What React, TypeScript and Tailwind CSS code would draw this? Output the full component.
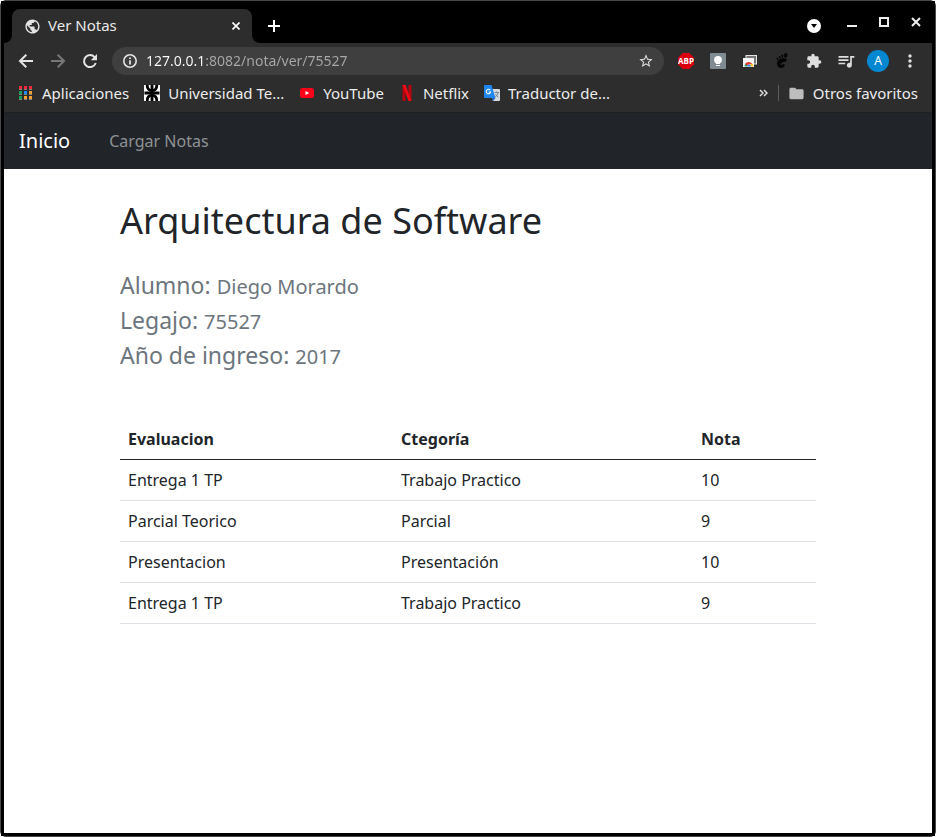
import type { ReactNode } from "react";
import {
  MdStarBorder,
  MdExtension,
  MdQueueMusic,
  MdMoreVert,
  MdPublic,
  MdFolder,
} from "react-icons/md";

const grades = [
  { evaluation: "Entrega 1 TP", category: "Trabajo Practico", grade: 10 },
  { evaluation: "Parcial Teorico", category: "Parcial", grade: 9 },
  { evaluation: "Presentacion", category: "Presentación", grade: 10 },
  { evaluation: "Entrega 1 TP", category: "Trabajo Practico", grade: 9 },
];

function ToolButton({ label, children }: { label: string; children: ReactNode }) {
  return (
    <button type="button" aria-label={label} className="flex h-7 w-8 shrink-0 items-center justify-center">
      {children}
    </button>
  );
}

function Bookmark({ icon, children }: { icon: ReactNode; children: ReactNode }) {
  return (
    <a href="#" className="flex items-center gap-2 whitespace-nowrap">
      <span className="flex size-4 shrink-0 items-center justify-center">{icon}</span>
      {children}
    </a>
  );
}

function BackIcon() {
  return (
    <svg width="20" height="20" viewBox="0 0 20 20" fill="none" stroke="#e4e4e4" strokeWidth="2">
      <path d="M17 10H4.500M10.300 3.700L4 10l6.300 6.300" />
    </svg>
  );
}

function ForwardIcon() {
  return (
    <svg width="20" height="20" viewBox="0 0 20 20" fill="none" stroke="#777" strokeWidth="2">
      <path d="M3 10h12.500M9.700 3.700L16 10l-6.300 6.300" />
    </svg>
  );
}

function ReloadIcon() {
  return (
    <svg width="20" height="20" viewBox="0 0 20 20">
      <path d="M14.600 6.200A6 6 0 1 0 15.700 12" fill="none" stroke="#e4e4e4" strokeWidth="2" />
      <path d="M17 3v6.200h-6.200z" fill="#e4e4e4" />
    </svg>
  );
}

function InfoIcon() {
  return (
    <svg width="16" height="16" viewBox="0 0 16 16" className="shrink-0" aria-hidden>
      <circle cx="8" cy="8" r="6.200" fill="none" stroke="#e4e4e4" strokeWidth="1.600" />
      <path d="M7.100 7.200h1.800v4.300H7.100zM7.100 4.400h1.800v1.700H7.100z" fill="#e4e4e4" />
    </svg>
  );
}

function AppsIcon() {
  const rows = [
    ["#f5273a", "#f5273a", "#f5273a"],
    ["#12a05c", "#1a8cff", "#f9a02c"],
    ["#12a05c", "#f9a02c", "#f9a02c"],
  ];
  return (
    <svg width="16" height="16" viewBox="0 0 16 16" shapeRendering="crispEdges">
      {rows.map((row, y) =>
        row.map((color, x) => (
          <g key={`${x}-${y}`}>
            <rect x={1 + x * 5} y={1 + y * 5} width="3" height="3" fill={color} />
            <rect x={1 + x * 5} y={4 + y * 5} width="3" height="1" fill="#9a9a9a" opacity="0.8" />
          </g>
        )),
      )}
    </svg>
  );
}

function UtnIcon() {
  return (
    <svg width="16" height="16" viewBox="0 0 16 16">
      <rect width="16" height="16" fill="#fff" />
      <g fill="none" stroke="#000" strokeWidth="2.8">
        <path d="M8 0v16M0.5 8h15" />
        <path d="M3.2 0c0 3.600 1.600 5.600 4.800 5.600S12.800 3.600 12.800 0" />
        <path d="M3.2 16c0-3.600 1.600-5.600 4.800-5.600s4.800 2 4.800 5.600" />
      </g>
    </svg>
  );
}

function YouTubeIcon() {
  return (
    <svg width="16" height="16" viewBox="0 0 16 16">
      <rect x="1" y="3" width="14" height="10" rx="2.500" fill="#ff0018" />
      <path d="M6.500 5.900v4.200L10.200 8z" fill="#fff" />
    </svg>
  );
}

function NetflixIcon() {
  return (
    <svg width="16" height="16" viewBox="0 0 16 16">
      <path d="M3.500 0h3v16l-3 .2zM9.500 0h3v16.200l-3-.2z" fill="#b5060f" />
      <path d="M3.500 0h3l6 16.200-3-.3z" fill="#f00914" />
    </svg>
  );
}

function TranslateIcon() {
  return (
    <svg width="16" height="16" viewBox="0 0 16 16">
      <path d="M6 4h9a1 1 0 0 1 1 1v10a1 1 0 0 1-1 1H9z" fill="#d6dade" />
      <path d="M1 0h6.500L11.400 13H1a1 1 0 0 1-1-1V1a1 1 0 0 1 1-1z" fill="#1e88f0" />
      <path d="M7.800 13h3.600L9 16z" fill="#1663c9" />
      <path d="M6.300 5.300A2.200 2.200 0 1 0 6.600 7H4.600" fill="none" stroke="#fff" strokeWidth="1.100" />
      <path d="M10.500 7.500h4.500M12.700 6.500v1M14.200 7.500c-.4 2-1.500 3.400-3 4.500M11.600 9.200c.6 1.300 1.500 2.200 2.700 3" fill="none" stroke="#6b7d8c" strokeWidth="0.900" />
    </svg>
  );
}

function AdblockIcon() {
  return (
    <svg width="16" height="16" viewBox="0 0 16 16">
      <path d="M4.700 0h6.600L16 4.700v6.600L11.300 16H4.700L0 11.300V4.700z" fill="#d8000f" />
      <text x="8" y="11" textAnchor="middle" fontSize="8" fontWeight="700" fontFamily="Open Sans, sans-serif" fill="#fff">
        ABP
      </text>
    </svg>
  );
}

function BulbIcon() {
  return (
    <svg width="16" height="16" viewBox="0 0 16 16">
      <rect width="16" height="16" rx="1" fill="#808a91" />
      <circle cx="8" cy="6.800" r="3.900" fill="#fff" />
      <path d="M6 9h4v2H6zM6 12h4v1H6z" fill="#fff" />
    </svg>
  );
}

function RemoteTabsIcon() {
  return (
    <svg width="16" height="16" viewBox="0 0 16 16">
      <rect x="4" y="2.500" width="10.500" height="8.500" fill="#777" stroke="#e6e6e6" />
      <rect x="1" y="5" width="11" height="9" fill="#f5f5f5" />
      <path d="M2.500 13.500a4.500 4.500 0 0 1 1-3l2 1.700-.5 1.300z" fill="#1ea362" />
      <path d="M3 11a4.500 4.500 0 0 1 7.300-.3l-3.600.9-1.700 1z" fill="#e33b2e" />
      <path d="M8.500 11l1.900-.3c.7.900 1 1.800 1 2.800H8.900z" fill="#fbc116" />
      <path d="M5 13.500a2 2 0 0 1 4 0z" fill="#3f7ff0" />
    </svg>
  );
}

function FootIcon() {
  return (
    <svg width="16" height="16" viewBox="0 0 16 16" fill="#050505">
      <path d="M10.800 5.200C7 5 2.600 7 2.900 10.500c.2 2.900 2.300 4.900 4.700 4.500 2-.3 3.200-1.700 3-3-.1-.9-.9-1.200-1.600-.7-.6.500-1 1-1.600.8-.9-.3-.4-1.900.8-2.600 1.600-.9 4.500-.5 4.600-2.500 0-1-.8-1.700-2-1.800z" />
      <ellipse cx="11.700" cy="2.300" rx="1.700" ry="2.300" transform="rotate(14 11.700 2.300)" />
      <ellipse cx="8.300" cy="3.100" rx="1.100" ry="1.700" />
      <ellipse cx="5.700" cy="4.300" rx="0.900" ry="1.400" transform="rotate(-15 5.700 4.300)" />
      <ellipse cx="3.400" cy="5.900" rx="0.800" ry="1.200" transform="rotate(-25 3.400 5.900)" />
    </svg>
  );
}

function TabStrip() {
  return (
    <div className="flex h-[42px] items-end pl-2">
      <div className="relative flex h-[34px] w-60 items-center rounded-t-lg bg-[#2d2d2d] pr-2 pb-0.5 pl-3 text-[#e8e8e8]">
        <MdPublic size={17} className="mt-0.5 text-[#e4e4e4]" aria-hidden />
        <h2 className="ml-[7px] flex-1 text-[15px]">Ver Notas</h2>
        <button type="button" aria-label="Cerrar pestaña" className="mt-0.5 flex size-4 items-center justify-center">
          <svg width="8" height="8" viewBox="0 0 8 8" stroke="#fff" strokeWidth="1.600">
            <path d="M0.500 0.500l7 7M7.500 0.500l-7 7" />
          </svg>
        </button>
        <svg className="absolute bottom-0 -left-2" width="8" height="8" fill="#2d2d2d" aria-hidden>
          <path d="M8 0v8H0a8 8 0 0 0 8-8z" />
        </svg>
        <svg className="absolute -right-2 bottom-0" width="8" height="8" fill="#2d2d2d" aria-hidden>
          <path d="M0 0v8h8a8 8 0 0 1-8-8z" />
        </svg>
      </div>
      <button type="button" aria-label="Nueva pestaña" className="ml-3 flex h-[34px] w-5 items-center justify-center text-white">
        <svg width="12" height="12" viewBox="0 0 12 12" stroke="#fff" strokeWidth="2">
          <path d="M6 0v12M0 6h12" />
        </svg>
      </button>
      <div className="ml-auto flex h-full items-center pt-1 pr-2 text-white">
        <button type="button" aria-label="Buscar pestañas" className="mt-1 mr-5 flex size-5 items-center justify-center">
          <svg width="14" height="14" viewBox="0 0 14 14">
            <circle cx="7" cy="7" r="7" fill="#fff" />
            <path d="M4 5h6L7 9z" fill="#000" />
          </svg>
        </button>
        <div className="mb-1 flex gap-4">
          <button type="button" aria-label="Minimizar" className="flex h-4 w-4 items-center justify-center">
            <svg width="10" height="10" shapeRendering="crispEdges"><path d="M0 8h10v2H0z" fill="#eee" /></svg>
          </button>
          <button type="button" aria-label="Maximizar" className="flex h-4 w-4 items-center justify-center">
            <svg width="10" height="10" shapeRendering="crispEdges"><path d="M1 1h8v8H1z" fill="none" stroke="#eee" strokeWidth="2" /></svg>
          </button>
          <button type="button" aria-label="Cerrar" className="flex h-4 w-4 items-center justify-center">
            <svg width="10" height="10" stroke="#eee" strokeWidth="2"><path d="M1 1l8 8M9 1l-8 8" /></svg>
          </button>
        </div>
      </div>
    </div>
  );
}

function Toolbar() {
  return (
    <div className="flex h-9 items-center bg-[#2d2d2d] px-1.5 text-[#dedede]">
      <ToolButton label="Atrás"><BackIcon /></ToolButton>
      <ToolButton label="Adelante"><ForwardIcon /></ToolButton>
      <ToolButton label="Recargar"><ReloadIcon /></ToolButton>
      <div className="mx-1.5 flex h-7 min-w-0 flex-1 items-center rounded-full bg-[#3f3f3f] px-2.5">
        <InfoIcon />
        <input
          aria-label="Dirección"
          defaultValue="127.0.0.1:8082/nota/ver/75527"
          className="ml-2 min-w-0 flex-1 bg-[linear-gradient(to_right,#fff_59px,#a8a8a8_59px)] bg-clip-text text-sm text-transparent outline-none"
        />
        <button type="button" aria-label="Agregar a favoritos"><MdStarBorder size={16} /></button>
      </div>
      <ToolButton label="Adblock Plus"><AdblockIcon /></ToolButton>
      <ToolButton label="Keep"><BulbIcon /></ToolButton>
      <ToolButton label="Pestañas remotas"><RemoteTabsIcon /></ToolButton>
      <ToolButton label="GNOME"><FootIcon /></ToolButton>
      <ToolButton label="Extensiones"><MdExtension size={16} /></ToolButton>
      <ToolButton label="Multimedia"><MdQueueMusic size={20} /></ToolButton>
      <ToolButton label="Perfil">
        <span className="flex size-[22px] items-center justify-center rounded-full bg-[#0288d1] text-xs text-white">A</span>
      </ToolButton>
      <ToolButton label="Menú"><MdMoreVert size={20} /></ToolButton>
    </div>
  );
}

function BookmarksBar() {
  return (
    <nav aria-label="Favoritos" className="flex h-[34px] items-center gap-[15px] border-b border-[#202020] bg-[#2d2d2d] px-3.5 pb-[5px] text-[15px] text-[#ececec]">
      <Bookmark icon={<AppsIcon />}>Aplicaciones</Bookmark>
      <Bookmark icon={<UtnIcon />}>Universidad Te...</Bookmark>
      <Bookmark icon={<YouTubeIcon />}>YouTube</Bookmark>
      <Bookmark icon={<NetflixIcon />}>Netflix</Bookmark>
      <Bookmark icon={<TranslateIcon />}>Traductor de...</Bookmark>
      <div className="ml-auto flex items-center gap-2.5">
        <button type="button" aria-label="Más favoritos">
          <svg width="9" height="8" viewBox="0 0 9 8" fill="none" stroke="#dedede" strokeWidth="1.500">
            <path d="M1 1l3 3-3 3M5 1l3 3-3 3" />
          </svg>
        </button>
        <span className="h-4 w-px bg-[#5c5c5c]" />
        <Bookmark icon={<MdFolder size={17} className="shrink-0 text-[#bdbdbd]" />}>Otros favoritos</Bookmark>
      </div>
    </nav>
  );
}

function StudentLine({ label, value }: { label: string; value: string }) {
  return (
    <p className="text-[23px] leading-[35px]">
      {label} <span className="text-xl leading-none">{value}</span>
    </p>
  );
}

export default function App() {
  return (
    <div className="flex min-h-screen flex-col rounded-md border border-[#484848] bg-black font-['Noto_Sans',sans-serif]">
      <div className="flex flex-1 flex-col border-x-3 border-b-3 border-black">
        <header>
          <TabStrip />
          <Toolbar />
          <BookmarksBar />
        </header>
        <div className="flex-1 bg-white text-[#212529]">
          <nav className="flex h-14 items-center gap-[39px] bg-[#212529] px-[15px]">
            <a href="#" className="text-xl text-white">Inicio</a>
            <a href="#" className="text-base text-[#909294]">Cargar Notas</a>
          </nav>
          <main className="mx-auto max-w-[720px] px-3 pt-[30px]">
            <h1 className="text-4xl leading-[43px]">Arquitectura de Software</h1>
            <section className="mt-[26px] text-[#6c757d]">
              <StudentLine label="Alumno:" value="Diego Morardo" />
              <StudentLine label="Legajo:" value="75527" />
              <StudentLine label="Año de ingreso:" value="2017" />
            </section>
            <table className="mt-[46px] w-full table-fixed text-left text-base">
              <colgroup>
                <col className="w-[273px]" />
                <col className="w-[300px]" />
                <col />
              </colgroup>
              <thead>
                <tr className="border-b border-[#212529]">
                  <th className="p-2 font-bold">Evaluacion</th>
                  <th className="p-2 font-bold">Ctegoría</th>
                  <th className="p-2 font-bold">Nota</th>
                </tr>
              </thead>
              <tbody>
                {grades.map((row, index) => (
                  <tr key={index} className="border-b border-[#dee2e6]">
                    <td className="p-2">{row.evaluation}</td>
                    <td className="p-2">{row.category}</td>
                    <td className="p-2">{row.grade}</td>
                  </tr>
                ))}
              </tbody>
            </table>
          </main>
        </div>
      </div>
    </div>
  );
}
